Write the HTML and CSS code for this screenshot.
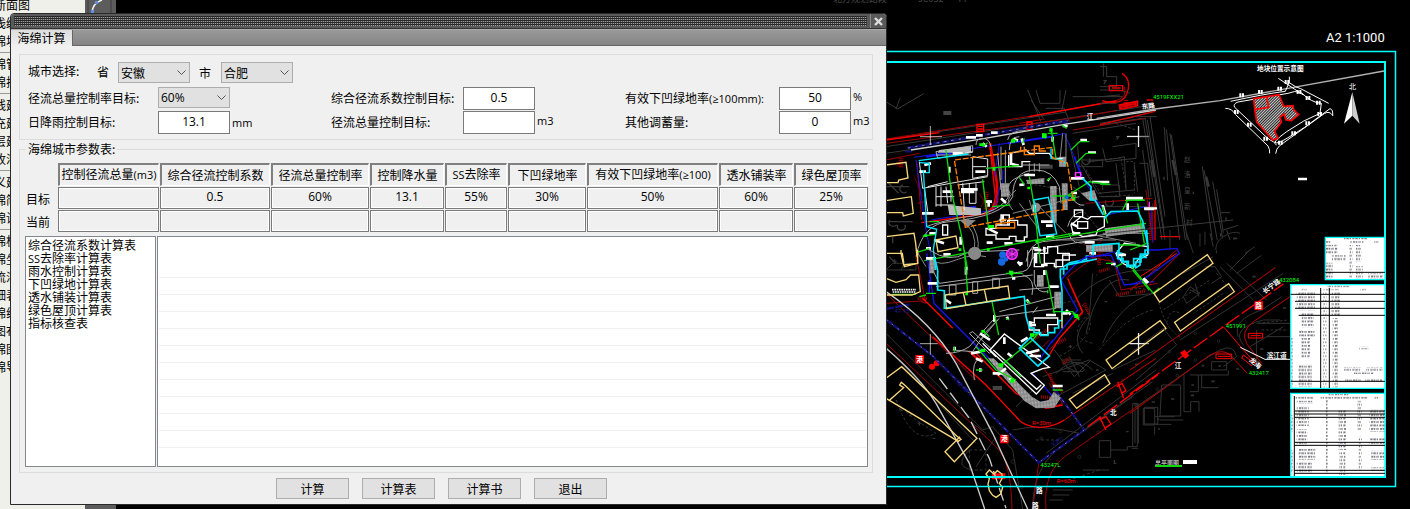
FILE: index.html
```html
<!DOCTYPE html>
<html lang="zh-CN">
<head>
<meta charset="utf-8">
<title>海绵计算</title>
<link rel="stylesheet" href="styles.css">
</head>
<body>
<div class="desktop">
  <nav class="palette" aria-label="工具">
    <ul><li>断面图</li><li>浅缝图</li><li>绵块图</li></ul>
    <ul><li>绵管网</li><li>绵排水</li></ul>
    <ul><li>线建模</li><li>充建模</li><li>层建模</li><li>收汇水</li></ul>
    <ul><li>义建模</li><li>绵简化</li><li>绵设施</li></ul>
    <ul><li>绵板块</li><li>绵坐标</li><li>流汇水</li><li>细表格</li><li>绵线型</li><li>图布局</li><li>绵图例</li><li>绵导出</li></ul>
  </nav>
  <div class="toolstrip">
    <svg viewBox="0 0 31 14" width="31" height="14" aria-hidden="true">
      <path d="M3 0V14M26 0V14" stroke="#3c3c3c" fill="none"/>
      <path d="M7 12Q8 3 17 0" stroke="#eee" stroke-width="1.5" fill="none"/>
      <path d="M6 10h3v3h-3zM10 1h3v3h-3z" fill="#5b8fe8"/>
    </svg>
  </div>
  <svg class="cad" viewBox="116 0 1294 509" preserveAspectRatio="xMaxYMin slice" role="img" aria-label="总平面图">
    <defs>
      <pattern id="hatch" width="6" height="6" patternUnits="userSpaceOnUse" patternTransform="rotate(45)"><rect width="6" height="6" fill="#222"/><path d="M1.5 0V6" stroke="#ccc" stroke-width="3"/></pattern>
      <pattern id="stall" width="9" height="12" patternUnits="userSpaceOnUse" patternTransform="rotate(-8)"><rect width="9" height="12" fill="#aaa"/><path d="M0 6h6M7 0v12" stroke="#555" stroke-width="1.5"/></pattern>
      <pattern id="ink" width="27" height="20.8" patternUnits="userSpaceOnUse"><path d="M1 4h5M8 4h3M12 4h7M21 4h3M3 14.4h6M11 14.4h5M18 14.4h2M22 14.4h4" stroke="#777" stroke-width="5"/><path d="M6 3h2M16 5h2M9 13h2M20 15h2" stroke="#b9a8cc" stroke-width="4"/></pattern>
    </defs>

    <g class="ghost-text"><text x="833" y="2">北方规划路段</text><text x="918" y="2">JC052</text><text x="957" y="2">TT</text></g>

    <!-- north half of the site -->
    <g transform="translate(886 90) scale(.33333)" fill="none" stroke-width="3">
      <g stroke="#383838">
        <path d="M0 35l35 22 78-46M30 57l12-32M425 0l40 95M435 30l40 60M450 0l12 40h60V0M480 55h55l15 40M540 0l-12 60M560 20h150M0 170L800 45M60 140L540 66M0 190l200-30M560 130l190-30M550 160l30 130M575 170l5 60h70v-20h-60M650 175l10 40 90-10v-45l-70 10M605 215l90-10 20-5 5 100M700 300l-10-80M745 225l10 80M760 220h25l10 100M770 180l20 150M640 320h60v-35h-50M650 300v-15M585 220l50 90 110-10M560 290l90 60h160"/>
        <path stroke-dasharray="8 5" d="M605 215l100-12 15 90M720 215h25v95M600 240l50 80 90-5M420 280l120 20 100 120M690 100l60 20"/>
        <path d="M0 290h70M8 280l30 30M50 285a12 12 0 1 0 12 20M10 395h70M12 390a12 10 0 1 0 20 15M36 405a12 10 0 1 0 20 0M590 205a12 12 0 1 0 20 0M660 330a12 12 0 1 0 20 0M10 500l20 20M20 440v20" stroke-width="4"/>
        <path d="M172 69h24M460 230h40" stroke-width="12" stroke="#444"/>
      </g>
      <g stroke="#a00000">
        <path d="M0 147L425 80 690 32Q725 22 715-10M0 160L560 85 690 62M0 210l100-20M560 120l220-35M400 100l70-12M95 340l20-5M92 210l15 180M600 340l200-15M780 300l20 150"/>
        <path stroke-width="2" d="M30 215l15 15M32 230l12-15M85 260l25 60M95 250l10 70M280 310l30 50M285 350l25-40M590 460l50 40M600 490l50-40M640 480l40 40M800 340v120"/>
        <path stroke-width="14" stroke-dasharray="3 3" d="M300 305v55M45 205v30M720 30v30M795 370v80"/>
      </g>
      <path stroke="#f00" stroke-width="4" d="M0 150L160 128M430 80L690 33M273 103h20v22h-20zM423 96h15v22h-15zM276 109h14M276 117h14M426 104h9M700 45l55-12v14l-50 10zM710 50l40-10M106 398l190-26Q325 360 328 320L312 170"/>
      <path stroke="#e00000" stroke-width="8" d="M312 160L333 280V330Q330 360 295 368"/>
      <g stroke="#10106e"><path stroke-width="9" stroke-dasharray="22 4" d="M65 174L545 92"/><path stroke-width="5" d="M56 185h22M500 95l50 4"/></g>
      <path stroke="#b9b9d8" stroke-width="2" stroke-dasharray="8 14" d="M65 174L545 92"/>
      <g stroke="#1414e8"><path d="M85 202l410-62 40-10 38 90 20 50 60 90M90 210l28 200 20 100M345 280l-20 80-190 30M340 160l-14 100M660 375l115-24 20 5 6 100M540 525l70-20 75-20 20 40M350 240v70"/><path stroke-width="6" d="M365 160l130-20M120 200l80-12M190 360l80-10M565 200l20 55"/></g>
      <path stroke="#cfcfcf" stroke-width="4" d="M75 180L280 148l255-45L810 60"/>
      <path stroke="#aaa" stroke-width="3" d="M150 185l110-18v20l-105 18zM150 195h105M90 500Q110 400 190 395Q350 380 380 320Q380 240 450 240Q500 240 520 290L525 340M120 410Q160 395 230 382Q350 370 372 310Q350 270 430 250M365 150Q370 120 420 122M370 180Q370 140 400 140M270 165q0-20 20-20t25 25M345 170v100M358 180v100M335 190l10 110M420 515Q430 460 470 455L690 430M430 530Q440 480 500 470L650 445M545 410Q555 370 590 365M548 430q10 40 60 25M555 320q20 30 40 25M430 220v25M445 220v25M460 220v25M410 225h80"/>
      <path stroke="#888" d="M225 390q50 30 40 95M245 385q40 50 30 100M400 340l60 80M430 330l30 100M380 370l200-50M140 510q20 20 70 0t90-10M90 480l30 50M530 130l-10 100M540 130v100M440 330l100 100M510 450h180M600 430l150 30M380 360q-30-30 10-60M650 430h140"/>
      <g fill="url(#stall)"><path d="M345 280h24v40h-24zM420 270l55-6v18h-50zM492 288h20v110h-18zM527 280h18v80h-15zM585 310l40-10 10 30-25 2zM655 415l115-15 5 25-115 15zM600 465h80v20h-80zM520 200h20v30h-20z"/></g>
      <g fill="#888"><circle cx="266" cy="490" r="19"/><circle cx="450" cy="352" r="14"/><path d="M220 390h50l-25 22z"/><path fill="#bbb" d="M185 345l100 10v20H190zM160 180l95-12v20h-100z"/><path d="M130 500h20v40h-15z"/></g>
      <g stroke="#e8e8e8"><path d="M100 215l10 80 195-35M115 290l10 75M125 290l60-15M150 290v60M165 290v60M180 290l5 50M195 285v50M150 320h55M150 345h55M230 280l5 80M250 280v60h20v-60M260 200v65l45-8v-50zM260 230h40M200 195l60-10M215 285l80-10"/></g>
      <g stroke="#fff" stroke-width="4"><path d="M368 195v35h40v-15h25M370 190l50-10 10 10h60l10 15h30M300 415v20h30v12h40v-8h20v14h25v-12h8v-36h-28v-14h-30v14h-35v10zM345 375h25v30h-25zM555 405l30-25 20 8 10-8h40v30l-20 10-5 15-40 5-30-15zM170 405h15v30h-15zM445 490h40v-20h30v20h35v20h-40v25M445 490v40h30M690 490l25-30 70 10v25l-30 15-15 25-30-15zM565 360h25v20h-25zM575 395h30v20h-30z"/></g>
      <g stroke="#fff" stroke-width="8"><path d="M170 305h30M225 298h50M225 306h40M108 370h35M240 142h30M270 136h20M382 146l14 6M407 145l6 20M500 140v15M375 190v35M378 222l20 5M268 245h30M200 190h30M115 225l20-5M100 245h20M190 230v18M298 335h20M308 330v20M355 460h25M302 458h18M172 493h22M130 505h20M120 475h15M224 440v24M130 430h20M144 450l30 10M446 345v22M415 255h32M465 395h35M480 407h20M555 309h18M555 265h40M583 150h20M606 188h24M618 276h52M720 325h50M650 345l8 28M725 340v20M775 357h30M690 490l30 5M555 400l20 10M558 430h25M450 490v30M475 470v15M610 490h20M345 325l15 14M350 375v20M400 285l15-2M485 268l5 3M290 160l12 10M305 415l30 15M340 390h20M440 475h20M596 457h30M395 515l10 12M480 440h25M530 108h15M465 525h20M315 128h20"/></g>
      <g stroke="#0bd90b" stroke-width="4"><path d="M90 488l40-12M110 438l40-5M115 512L560 430M180 180l15 120 30 130 20 110M290 268l18 150M300 235l100-8M430 260l15 90 18 170M450 455L780 400M495 115l15 90M528 105l14 10M378 146l15 8M400 262l15 22M495 262l-12 10M318 350l55-5M500 318h70M540 320l70-45 60 8M555 180l25-25h30M570 220l30-30h30M650 350l15 50M710 360l15-30h50M755 340l20 120M760 465h-60M485 130h30M470 130l10 15M680 520l15 15M540 315l-10 20M130 395h30M410 160l5-15M290 170l15-12"/></g>
      <g fill="#0f0"><path d="M375 148h12v10h-12zM468 130h14v14h-14zM490 115h10v10h-10zM280 160h14v8h-14zM308 405h16v9h-16zM115 433h8v8h-8zM218 475h8v8h-8zM303 475h8v8h-8zM448 450h9v8h-9zM558 322h10v10h-10zM320 232h8v10h-8zM424 290h8v8h-8z"/></g>
      <g stroke="#00e8ff" stroke-width="4"><path d="M98 212l150-20M102 218l28 2v28h-12M112 240l10 170 30 8-10 60 8 62M443 330l44-8 25 110-50 5zM495 175v30l30 4 15 12"/><path stroke-width="5" d="M590 265l25 25v40h12l25 45M655 385l20-20 80-2 15 30 15 70M785 465v15h-8v12h-14v14h-20v20h-16v-12h-20v-24h-8v-30l-78 6v32h-20v10l-50 10-18 12v24"/></g>
      <g stroke="#ff8000" stroke-width="4"><path stroke-dasharray="18 5" d="M238 412L205 210l295-38v32l44 15 18 110-30 5v25l-70 10z"/><path d="M404 170v12h20M415 170v24h30v-26h15v15h20M330 400v14h56v-18l-56 5"/></g>
      <g stroke="#f8d87c" stroke-width="4"><path d="M0 225l60-8 6 47-28 6-2 8H0M0 332l76-12 6 50-30 8-2-10H0M0 440l84-10 5 30 6 60-40 10-6-40H0M150 450l60-12 6 35-60 12z"/></g>
      <g stroke="#ff30ff" stroke-width="4"><circle cx="378" cy="492" r="16" fill="#5c1a70"/><path d="M366 484l24 14M378 478v28M366 500l24-14M364 492h28M568 248h16v12h-16zM790 335v20"/></g>
      <g fill="#1468e0"><circle cx="350" cy="495" r="10"/><circle cx="346" cy="515" r="10"/><circle cx="360" cy="508" r="7"/><circle cx="542" cy="322" r="6"/></g>
      <path stroke="#fff" stroke-width="2" d="M133 108v57M102 140h66M757 108v63M723 140h67"/>
      <g class="mark"><text x="602" y="86">江</text></g>
    </g>

    <!-- south half of the site and the roads -->
    <g transform="translate(886 250) scale(.33333)" fill="none" stroke-width="3">
      <g stroke="#333">
        <path d="M0 250L290 540l30-10 60 70 30 177M0 290l270 290M560 160q90-110 260-100M620 70l-10 130q-60 60-20 110M600 250q40-180 130-160M650 280q50-120 150-150M670 90l30 50 110-10M380 540q80-20 200 10L800 395M480 610l330-250M440 777q0-130 90-190L740 440M640 572h34v50h-34zM674 600h50v-10h30M740 590V460h14v130M775 472h40v50h-40zM590 660h80M500 720h60M500 735h50M490 750h40M0 60h90v-20H20zM45 60l10-20M250 600q-50 50 10 60M330 560l-60 90M470 380l140-50 50 30-150 80M505 300l60 80 50-50M510 370q60-60 110-10M540 350l40 20M550 320l30 60M525 330h60M530 345q20-20 50 0t0 20-50 0M680 360l130-60M560 430l120-60M260 520l40 30M390 470l60-60"/>
        <path stroke-dasharray="9 6" d="M530 160q60-20 80 40t-90 120M600 200q-60 60 20 80M640 300q80-100 160-120M250 600h50v60h-50zM30 450q30 40 60 60t60 40q-40 20-70-10t-50-90M640 660l-90 30M450 570h70"/>
        <path stroke-width="4" d="M20 35h12M26 28v14M70 60h12M40 475l10 8M70 498l8-6M95 520h10M100 515v12M140 565h8M548 290h10M553 285v10M630 360h8M720 545h8M685 630v10h6M600 205h2M630 75h2M656 155h8"/>
        <g stroke-width="2"><circle cx="523" cy="545" r="4"/><circle cx="466" cy="565" r="4"/><circle cx="580" cy="621" r="5"/><circle cx="637" cy="547" r="4"/><circle cx="750" cy="465" r="4"/><circle cx="407" cy="710" r="5"/><circle cx="380" cy="635" r="5"/><circle cx="710" cy="392" r="4"/></g>
        <path stroke="#444" stroke-width="12" d="M320 414h28"/>
      </g>
      <g stroke="#a00000">
        <path d="M0 130L270 390M0 280L330 590Q375 630 378 777M540 85q60-50 90-60l55 10 20 85 110-20M490 300l100-110-40-90M490 400l40 60-40 15-60-20-70-90M440 320l50-50M470 350l40 60M90 20l30 140-15-5M0 160l120-8M480 777q-10-110 60-160L810 430M440 777L458 640"/>
        <path stroke-width="10" stroke-dasharray="3 3" d="M595 160l14 30M490 370l10 30M530 340l20-16M690 135l40-8M640 65l30-10M610 15l30 20M465 440l35 5M440 270l45-30M470 250l20-15M750 128l30-6M640 5v40M500 400l30 25M515 280l25-15M95 145h30"/>
      </g>
      <path stroke="#f00" stroke-width="4" d="M110 145l90 90M270 310l120 120 90 45 50-10M545 85l45 100-70 80-30 50M140 260l160 145 90 95q20 30 70 32 40 0 75-22M640 500l20 40M695 395l18 50M640 510l20-10 15 22-18 12M692 410l16-10 12 22-14 8"/>
      <path stroke="#f00" stroke-width="4" stroke-dasharray="50 10" d="M605 530l210-155"/>
      <path stroke="#d00000" d="M535 510L810 325"/>
      <g fill="#f00"><circle cx="138" cy="350" r="9"/><circle cx="152" cy="340" r="9"/><path d="M88 315h26v26H88zM342 554h26v26h-26zM240 298l45 30-10 5zM318 670h40v18h-40z"/></g>
      <g stroke="#10107c"><path stroke-width="7" stroke-dasharray="24 4" d="M0 208L140 318 458 638 595 540 500 410M0 177l70-14"/></g>
      <path stroke="#c8a8c8" stroke-width="2" stroke-dasharray="6 16" d="M0 208L140 318 458 638 595 540 500 410"/>
      <g stroke="#1414e8" stroke-width="4"><path d="M122 10l22 150 130 130 130 130 50 35 30 5M525 90q50-60 80-70l70-5 40 90 90-10M525 90l50 90-40 50-40 50M440 370l60 70M500 270l-40 60M130 90v40"/></g>
      <g stroke="#ccc"><path stroke-width="4" d="M0 125Q140 220 210 340L320 550 425 777M0 295Q100 380 150 460L250 640 296 777"/><path stroke-width="4" stroke-dasharray="40 14" d="M160 385l90 120 60 120 50 150"/></g>
      <g stroke="#aaa"><path d="M140 60l20 40 250-35Q440 60 440 0M150 110l290-35M180 310q40 0 70-20l80-90 180-25M200 300l60 5 40-60 40-40M265 390q-10-60 20-65M340 185L510 140M425 0v50M410 75q40 10 28 60M445 60v40q10 30 40 25M190 105h20v30h-20zM260 95h15v35h-15zM320 85h20v30h-20zM440 190l15-20M250 250l60 60 10-10-60-55zM285 270l50-60M425 10q20-30 60 0M130 0q60 40 110 10M270 5L400 0M400 120l120-10"/></g>
      <g fill="url(#stall)"><path d="M305 325h18l115 115 25 15 25-5 15-25 22 18-20 30-55 2-35-22zM505 125h20v50h-20zM453 75h20v35h-20zM130 30h15v40h-15z"/></g>
      <circle cx="266" cy="10" r="19" fill="#888"/>
      <g stroke="#fff" stroke-width="4"><path fill="#000" d="M312 300l43-48 135 100-20 4-35 14 40 36-24 26z"/><path d="M322 300l130 118 14-14M290 280l40 40M430 215v25h30v14h25v-30h30v-20h-70v15zM475 0v40h30v10h25v-35h40"/></g>
      <g stroke="#fff" stroke-width="8"><path d="M240 50v24M120 25h20M125 100h30M325 195v20M282 250l30 20M283 355v10M206 290v10M255 310l30-5M270 325l20 10M320 370h30M335 375l25-20M370 385l14 10M355 262v20M365 310l15 12M405 275l20-12M420 310l40-10M430 318h35M435 215v15M430 225h20M500 408h30M540 180l14 14M488 110h30M475 60v15M378 85h10M400 40h10M422 148l6 10M445 0h20M690 15h25M775 88l12 10M675 42h14M480 195h30M180 150l15 10M525 190h20M360 205l8-2"/><path stroke-width="5" stroke-dasharray="5 2" d="M18 119h72M20 126h68"/></g>
      <g stroke="#0bd90b" stroke-width="4"><path d="M235 0l10 130M318 155l20 100M360 70h50M370 62l10 20M480 60l25 130M680 40h-20M690 50l20-10M740 60l50 60M500 185h60l20 20M205 305v-15M290 240l20 20M430 265l30-20-20 25L340 350M355 330l50 50M270 360h20M500 420h30M415 150l20 10M100 140l20-5M18 133h72M270 290l60 70 60 30M360 205l10 5M560 190l20 20M485 120v10M120 130h30"/></g>
      <g fill="#0f0"><path d="M370 62h12v12h-12zM284 296h14v10h-14zM338 340h14v12h-14zM373 386h12v12h-12zM565 192h12v12h-12zM432 250h12v10h-12zM286 240h10v8h-10zM238 128h8v8h-8z"/></g>
      <g stroke="#00e8ff" stroke-width="5"><path d="M145 20l10 40v60l20 2v53l240-36 5 60 10 35h14v14h20v8h22v-8h20v-14h12v-22h10v-90l-5-40v-25h20v-12l50-10 40-8M400 295l33-32 57 55-34 30z"/><path d="M695 0v26h16v10h12v14h26v-14h16v-14h18"/></g>
      <g stroke="#f8d87c" stroke-width="4"><path d="M178 135l188-27 5 36-190 32zM232 128l8 38M295 118l8 38M0 85l30 12 30-8 14-14h24l5 50-25 10H0M45 0v10l8 35 42-5V0M0 385l47-35 226 215-68 70-28-30 45-45M0 445l10 6 43-38-12-8 5-8 14 12L212 558l13 10-8 6zM660 330L822 212l18 23L678 356zM550 448l106-74 16 27-100 74zM300 672l10-12 14 12 10-10 14 10v14l-8 14 10 12-6 20-14 10-10-6-10-14-4-20 4-16zM528 190v45"/></g>
      <g><circle cx="378" cy="12" r="16" fill="#5c1a70" stroke="#ff30ff" stroke-width="4"/><path d="M366 4l24 14M366 20l24-14M378-2v28M364 12h28" stroke="#ff30ff" stroke-width="3"/><circle cx="350" cy="14" r="10" fill="#1468e0"/><circle cx="347" cy="36" r="11" fill="#1468e0"/></g>
      <path stroke="#fff" stroke-width="2" d="M133 252v62M102 281h53M757 250v64M727 281h62"/>
      <g class="mark"><text x="91" y="335">港</text><text x="345" y="574">港</text><text x="672" y="496">北</text><text x="450" y="728">路</text><text x="438" y="775">路</text></g>
      <text class="red" x="438" y="525">R=30m</text><text class="green" x="463" y="651">43247L</text><text class="blue" transform="translate(200 390) rotate(43)">112.48</text><text class="blue" transform="translate(500 590) rotate(-30)">X301</text><text class="blue" x="25" y="190">47.45</text><text class="red" x="512" y="700">R=60m</text>
    </g>

    <!-- location sketch and north arrow -->
    <g transform="translate(1100 0) scale(.33333)" fill="none" stroke-width="3">
      <g stroke="#383838"><path d="M0 200h20v30h30v30H0M0 270h60l30 10M0 290l60-5M0 310h50M10 190v40M0 370l100-18M100 350h70M0 375l125-20M128 355l58 365M135 355l60 365M142 360l50 330M150 350l45 300M193 382l10 160M199 388l40 332M210 400l46 320M214 405l48 315M307 500l30 220M312 510l40 210M338 545l30 170M350 568l20 130M362 638h28M370 690l44-14M20 700l380-40M380 690l10 30"/><path stroke-width="8" d="M155 480l8 50M218 480l10 45M318 530l8 30"/><path stroke-width="4" d="M10 242h8l-6 10M48 410h8l-6 8M192 530v10M280 575v8M378 652v10M362 700v10M400 715h12"/></g>
      <path stroke="#b3b3b3" stroke-width="4" d="M-10 355L165 327 360 302 852 213"/>
      <path stroke="#e00000" stroke-width="4" d="M66 220q30 20 15 60t-75 22M0 374l165-40M140 300h20M28 257h40v15H28zM36 264h26M58 318l50-12v12l-48 10zM62 322l44-10M165 600v120M180 710h60"/>
      <g stroke="#fff"><path d="M81 409h37M116 378v63"/><path stroke="#888" d="M118 409h28"/><path stroke-width="7" d="M594 537h27M78 594h50M132 625h39"/><path d="M392 304q100-22 164-30l12-28V230M404 322q-6-10 10-16l150-26q20-10 40-2 30 30 60 32l-4 30q-50 20-100 55t-30 40M535 235l75 50M568 248q20 15 34 18l84 44M404 322l96 90q24 20 36 16t78-46l76-56q10 2 8 22M376 325q20 0 30 18L504 438q6 10 5 22M698 346q-10-14-24-6L540 436q-12 10-13 25"/></g>
      <path fill="url(#hatch)" stroke="#f00" stroke-width="5" d="M461 296l76-12 14 35 28-2 2 12 15 15-22 18-16-2-6-18-12 10 4 14-20 28 10 20-16 6-48-54-6-40z"/>
      <path stroke="#f00" stroke-width="5" d="M500 292l6 30-40 6"/>
      <g stroke="#fff" stroke-width="12" stroke-dasharray="6 2"><path d="M418 286h14M474 276h14M532 266h14M590 276h14M617 294h14M648 308h14M652 342h14M616 370h14M574 400h14M534 428h14M490 416h14M441 374h14M402 336h14M554 246h14"/></g>
      <path fill="#fff" d="M757 276l-25 95 25-24z"/><path fill="#ccc" d="M757 276l22 95-22-24z"/>
      <g class="vlabel"><text x="252" y="485">赵</text><text x="252" y="532">洛</text><text x="252" y="578">皇</text><text x="252" y="626">新</text><text x="258" y="674">村</text></g>
      <g stroke="#0bd90b"><path d="M0 553h32M75 601h60"/></g>
      <text class="title" x="471" y="213">地块位置示意图</text><text class="north" x="746" y="268">北</text><text class="green" x="159" y="296">4519FXX21</text><text class="mark" transform="translate(126 328) rotate(-8)">东路</text>
    </g>

    <!-- eastern road -->
    <g transform="translate(1130 230) scale(.33333)" fill="none" stroke-width="3">
      <g stroke="#333"><path d="M0 370l100-75 40 50L18 450M20 530l200-140 50-30q40-20 50 20l-40 30M250 80L160 130M260 70q-10-30 20-50t50-10M290 100l120 110M270 110L370 210M320 130l74-54M300 120l60-60M345 70l30-20M160 200l20-30 30 20-40 30zM180 180l24 12M195 160l12 40M225 110h30l20 30-30 20M150 330L460 130M325 320q-20-50 70-80l60-40M340 345q-40-50 60-75h50M380 280h110M380 300v110M410 320h75M360 350l100-60M180 435h25v50h-25M162 435v110h20v-30h25v30M205 435h90v-14M245 395v25h45v-25zM215 433v40h50M95 465h57v93H90zM40 535h34v50H40zM74 560h60M74 583h50M15 540v100M25 520v120M5 655h20M90 570h70M74 590v24M210 10v40M225 5v40M240 10l10 40M170 10l20 60M120 0v60"/><path stroke-dasharray="8 5" d="M100 240L240 150M0 180q70-20 90 50t60 90M110 280q10-50 40-30M260 130l50 60M385 280l90-10M395 300h80M280 190l-90 60"/><path stroke-width="5" d="M15 403h10M65 516h10M123 507h10M182 496h10M244 454h10M215 407h8M390 357h10M367 140h10M309 26h10M318 417h10M458 234h10M265 408h8M184 465h8M84 597h6M82 568h6"/><g stroke-width="2"><circle cx="196" cy="390" r="4"/><circle cx="142" cy="437" r="4"/><circle cx="82" cy="478" r="4"/><circle cx="18" cy="525" r="4"/><circle cx="196" cy="310" r="4"/><circle cx="118" cy="365" r="4"/><circle cx="393" cy="228" r="4"/><circle cx="266" cy="333" r="4"/></g></g>
      <g stroke="#c00000"><path d="M0 420L436 113M0 550l240-175q40-20 60 0l52 55M480 200l-110 75q-40 30-20 65l45 60M0 180l40-30 100-90M60 160l90-90"/><path stroke="#f00" stroke-width="4" stroke-dasharray="50 9" d="M0 492L280 290 460 162"/><path stroke="#f00" d="M280 290l100 115M355 310h43v14h-43zM362 317h30M258 372h47v14h-47zM264 379h36M340 375l34 26M336 384l30 24M340 375l-5 10"/><path fill="#f00" stroke="none" d="M373 214h26v26h-26zM150 368l14-9 14 18-13 9z"/></g>
      <path stroke="#1414e8" stroke-width="4" d="M55 60l25 0 60-5 8 15L40 150 0 165"/>
      <path stroke="#f00" d="M30 140L140 70"/>
      <path stroke="#00e8ff" stroke-width="5" d="M50 0l5 70-25 10v25l-15 10"/>
      <path stroke="#0bd90b" stroke-width="4" d="M5 110l65 80 18-16M0 60l50-20"/>
      <path stroke="#fff" stroke-width="9" d="M40 145l12 14"/>
      <g stroke="#f8d87c" stroke-width="4"><path d="M72 190L232 74l17 26-160 116zM134 277l162-116 17 24-162 118z"/></g>
      <path stroke="#fff" d="M331 352l74 36h75M26 309v65M0 341h43"/>
      <g class="mark"><text x="134" y="413">江</text><text x="376" y="234">路</text><text transform="translate(404 192) rotate(-36)">长宁路</text><text x="410" y="384" class="big">滨江道</text><text transform="translate(356 392) rotate(40)">龙海</text></g>
      <text class="green" x="447" y="156">432084</text><text class="green" x="287" y="295">451991</text><text class="green" x="356" y="435">432417</text>
      <text class="plan" x="75" y="704">总平面图</text><path stroke="#0bd90b" stroke-width="6" d="M75 708h81"/><path fill="#fff" d="M159 690h42v12h-42z"/>
    </g>

    <g fill="none" stroke="#0ff"><path stroke-width="1.5" d="M860 51.5H1395.5V486.5H860"/><path stroke-width="2" d="M860 62H1385V477H860"/></g>

    <!-- indicator tables -->
    <g transform="translate(1280 230) scale(.33333)">
      <g fill="#fff" stroke="#0ff" stroke-width="4"><path d="M136 22h179v127H136zM32 164h283v311H32zM32 490h283v250H32z"/></g>
      <g fill="url(#ink)"><path d="M192 24h70v7h-70zM138 34h14v7h-14zM210 34h40v7h-40zM283 34h12v7h-12zM138 44h34v28h-34zM155 76h42v18h-42zM138 98h20v48h-20zM208 45h10v100h-10zM228 45h16v50h-16zM228 108h20v38h-20zM264 130h45v18h-45z"/><path d="M142 166h66v6h-66zM65 174h16v7H65zM130 174h46v7h-46zM240 174h18v7h-18zM50 186h55v55H50zM65 248h36v44H65zM58 300h46v22H58zM64 324h26v60H64zM55 404h40v66H55zM130 186h9v286h-9zM154 186h26v75h-26zM158 264h16v208h-16zM237 350h28v8h-28zM192 412h50v10h-50zM258 412h50v10h-50zM222 424h58v8h-58zM196 446h50v10h-50zM256 446h50v10h-50zM34 324h5v146h-5z"/><path d="M144 491h62v6h-62zM44 500h56v8H44zM122 500h140v8H122zM284 500h14v8h-14zM50 512h48v9H50zM50 528h36v60H50zM50 598h32v50H50zM56 656h50v34H56zM50 695h45v34H50zM138 510h5v220h-5zM176 540h22v120h-22zM178 666h18v70h-18zM232 512h14v90h-14zM236 620h10v100h-10zM268 538h46v68h-46zM268 624h46v24h-46zM274 662h38v28h-38zM274 712h38v10h-38zM34 555h5v50h-5zM34 660h5v70h-5z"/></g>
      <path fill="none" stroke="#000" stroke-width="3" d="M136 127h179M32 193h283M45 214h270M45 235h270M56 256h259M32 454h283M122 174v300M148 174v300M43 498v240M43 543h272M43 552h272M43 562h272M43 637h272M43 646h272M43 721h272M43 730h272"/>
    </g>
    <text class="scale" x="1326" y="42">A2 1:1000</text>
  </svg>

  <section class="dialog" role="dialog" aria-label="海绵计算">
    <header class="titlebar"><span class="grip"></span>
      <button class="close" type="button" aria-label="关闭"><svg viewBox="0 0 9 9" width="9" height="9"><path d="M1 1l7 7M8 1L1 8" stroke="#ddd" stroke-width="2.4"/></svg></button>
    </header>
    <div class="tabs" role="tablist"><button class="tab" type="button" role="tab" aria-selected="true">海绵计算</button></div>
    <form class="content" onsubmit="return false">
      <fieldset class="group targets">
        <div class="city">
          <span class="city-label">城市选择:</span>
          <label for="province">省</label>
          <span class="pick"><select id="province"><option>安徽</option></select><svg viewBox="0 0 9 6"><path d="M0.5 0.5l4 4 4-4"/></svg></span>
          <label class="city-name" for="city">市</label>
          <span class="pick"><select id="city"><option>合肥</option></select><svg viewBox="0 0 9 6"><path d="M0.5 0.5l4 4 4-4"/></svg></span>
        </div>
        <div class="fields">
          <label for="rate">径流总量控制率目标:</label>
          <span class="pick"><select id="rate"><option>60%</option></select><svg viewBox="0 0 9 6"><path d="M0.5 0.5l4 4 4-4"/></svg></span><span></span>
          <label for="coef">综合径流系数控制目标:</label><input id="coef" value="0.5"><span></span>
          <label for="green">有效下凹绿地率<span class="latin">(≥100mm):</span></label><input id="green" value="50"><span class="unit">%</span>
          <label for="rain">日降雨控制目标:</label><input id="rain" value="13.1"><span class="unit low">mm</span>
          <label for="total">径流总量控制目标:</label><input id="total" value=""><span class="unit">m3</span>
          <label for="other">其他调蓄量:</label><input id="other" value="0"><span class="unit">m3</span>
        </div>
      </fieldset>
      <fieldset class="group params">
        <legend>海绵城市参数表:</legend>
        <table class="summary">
          <colgroup><col class="c-name"><col class="c-total"><col class="c-coef"><col class="c-rate"><col class="c-mid"><col class="c-ss"><col class="c-low"><col class="c-eff"><col class="c-mid"><col class="c-mid"></colgroup>
          <thead><tr><td></td><th>控制径流总量<span class="latin">(m3)</span></th><th>综合径流控制系数</th><th>径流总量控制率</th><th>控制降水量</th><th><span class="latin">SS</span>去除率</th><th>下凹绿地率</th><th>有效下凹绿地率<span class="latin">(≥100)</span></th><th>透水铺装率</th><th>绿色屋顶率</th></tr></thead>
          <tbody>
            <tr><th scope="row">目标</th><td></td><td>0.5</td><td>60%</td><td>13.1</td><td>55%</td><td>30%</td><td>50%</td><td>60%</td><td>25%</td></tr>
            <tr><th scope="row">当前</th><td></td><td></td><td></td><td></td><td></td><td></td><td></td><td></td><td></td></tr>
          </tbody>
        </table>
        <div class="panes">
          <ul class="sheets"><li>综合径流系数计算表</li><li><span class="latin">SS</span>去除率计算表</li><li>雨水控制计算表</li><li>下凹绿地计算表</li><li>透水铺装计算表</li><li>绿色屋顶计算表</li><li>指标核查表</li></ul>
          <div class="sheet"><div class="rules"></div></div>
        </div>
      </fieldset>
      <div class="actions"><button type="button">计算</button><button type="button">计算表</button><button type="button">计算书</button><button type="button">退出</button></div>
    </form>
  </section>
</div>
</body>
</html>
```

FILE: styles.css
```css
* { box-sizing: border-box; }
body {
  margin: 0;
  background: #000;
  color: #000;
  font: 12px/16px "Noto Sans CJK SC", sans-serif;
}
button, input, select { font: inherit; color: inherit; margin: 0; border-radius: 0; }
ul { list-style: none; margin: 0; padding: 0; }

.desktop { position: relative; display: flex; height: 100vh; min-height: 509px; overflow: hidden; }

.palette { width: 85px; flex: none; background: #f0f0eb; overflow: hidden; }
.palette ul { border-bottom: 1px solid #999; padding-bottom: 2px; margin-bottom: 2px; }
.palette ul:first-child { margin-top: -4px; }
.palette ul:last-child { border: 0; }
.palette li { line-height: 18px; text-indent: -6px; white-space: nowrap; }

.toolstrip { width: 31px; flex: none; background: #5c5c5c; }
.toolstrip svg { display: block; }

.cad { flex: 1; min-width: 0; height: 100%; display: block; }
.cad text { stroke: none; font-family: "Noto Sans CJK SC", sans-serif; }
.cad .scale { fill: #fff; font: 13px Roboto, sans-serif; }
.cad .ghost-text text { fill: #444; font-size: 9px; }
.cad .mark, .cad .mark text { fill: #fff; font-size: 20px; font-weight: bold; }
.cad .title { fill: #fff; font-size: 20px; font-weight: bold; }
.cad .north { fill: #fff; font-size: 22px; }
.cad .plan { fill: #bbb; font-size: 18px; font-weight: bold; }
.cad .vlabel text { fill: #444; font-size: 20px; }
.cad .green, .cad .red, .cad .blue { font-family: "Liberation Sans Narrow", Roboto, sans-serif; font-size: 18px; }
.cad .green { fill: #0f0; }
.cad .red { fill: #f00; }
.cad .blue { fill: #1a1a90; }

/* floating palette window */
.dialog {
  position: absolute;
  left: 10px;
  top: 13px;
  width: 877px;
  border: 1px solid #2a2a2a;
  border-radius: 4px 4px 0 0;
  background: #f0f0f0;
}
.titlebar {
  display: flex;
  align-items: center;
  height: 15px;
  padding-left: 3px;
  background: #5a5a5a;
  border-bottom: 1px solid #333;
  border-radius: 3px 3px 0 0;
}
.grip {
  flex: 1;
  height: 10px;
  background: conic-gradient(#222 25%, #a0a0a0 0 50%, #484848 0 75%, #2c2c2c 0) 0 0 / 2px 2px;
}
.close { display: flex; align-items: center; justify-content: center; width: 16px; height: 14px; margin-left: 3px; padding: 0; border: 0; border-left: 1px solid #888; background: none; }
.tabs { display: flex; height: 17px; background: linear-gradient(#999, #858585); border-top: 1px solid #aaa; border-bottom: 1px solid #666; }
.tab { width: 62px; height: 16px; padding: 0; border: 0; border-right: 1px solid #666; background: linear-gradient(#ddd, #f0f0f0); line-height: 16px; white-space: nowrap; }

.content { padding: 8px 13px 5px 8px; }
.group { margin: 0; border: 1px solid #dcdcdc; min-width: 0; }
.targets { height: 86px; padding: 7px 0 0 8px; }
.city { display: flex; height: 21px; align-items: center; }
.city-label { width: 69px; padding-bottom: 3px; }
.city > label { width: 21px; padding-bottom: 2px; }
.city > .city-name { width: 22px; margin-left: 9px; padding-bottom: 0; }
.fields {
  display: grid;
  grid-template-columns: 130px 72px 101px 132px 72px 90px 154px 72px 1fr;
  grid-auto-rows: 23px;
  row-gap: 1px;
  padding-top: 4px;
  align-items: start;
}
.fields label { padding-top: 1px; line-height: 20px; white-space: nowrap; }
.latin { font-family: "Open Sans", "Noto Sans CJK SC", sans-serif; font-size: 11px; }
.pick { position: relative; display: block; width: 72px; height: 21px; }
.pick select { appearance: none; width: 100%; height: 100%; padding: 0 2px; border: 1px solid #adadad; background: #e1e1e1; }
.pick svg { position: absolute; right: 4px; top: 8px; width: 9px; height: 6px; fill: none; stroke: #555; pointer-events: none; }
.fields select, .fields input, .unit { font-family: "Open Sans", sans-serif; }
.fields input { width: 72px; height: 23px; padding: 0 0 2px; border: 1px solid #7a7a7a; background: #fff; text-align: center; }
.unit { padding-left: 2px; line-height: 20px; font-size: 11px; }
.low { padding-top: 2px; }

.params { margin-top: 1px; padding: 0 4px 5px 5px; }
.params legend { margin-left: 1px; padding: 0 2px; line-height: 16px; white-space: nowrap; }
.summary { width: 844px; table-layout: fixed; border-spacing: 1px; margin-top: 5px; }
.c-name { width: 31px; }
.c-total { width: 101px; }
.c-coef { width: 110px; }
.c-rate { width: 98px; }
.c-mid { width: 74px; }
.c-ss { width: 62px; }
.c-low { width: 78px; }
.c-eff { width: 131px; }
.summary th, .summary td { padding: 0; font-weight: normal; text-align: center; white-space: nowrap; overflow: hidden; line-height: 18px; }
.summary thead th { height: 23px; padding-bottom: 1px; border: 1px solid #fff; border-top: 2px solid #808080; border-left: 2px solid #808080; }
.summary tbody td { height: 22px; padding-bottom: 2px; border: 1px solid #7a7a7a; box-shadow: inset 0 0 0 1px #fff; font-family: "Open Sans", sans-serif; }
.summary tbody th { padding-top: 2px; text-align: left; }

.panes { display: flex; gap: 1px; height: 231px; margin-top: 3px; }
.sheets, .sheet { border: 1px solid #828790; background: #fff; }
.sheets { width: 131px; padding: 1px 2px; white-space: nowrap; }
.sheets li { height: 13px; line-height: 13px; }
.sheet { flex: 1; padding: 24px 1px 3px; }
.rules { height: 100%; background: repeating-linear-gradient(#fff 0 16px, #f0f0f0 16px 17px); }

.actions { display: flex; gap: 13px; padding: 5px 0 0 257px; }
.actions button { width: 73px; height: 21px; padding: 0; border: 1px solid #adadad; background: #e1e1e1; line-height: 18px; }
```
